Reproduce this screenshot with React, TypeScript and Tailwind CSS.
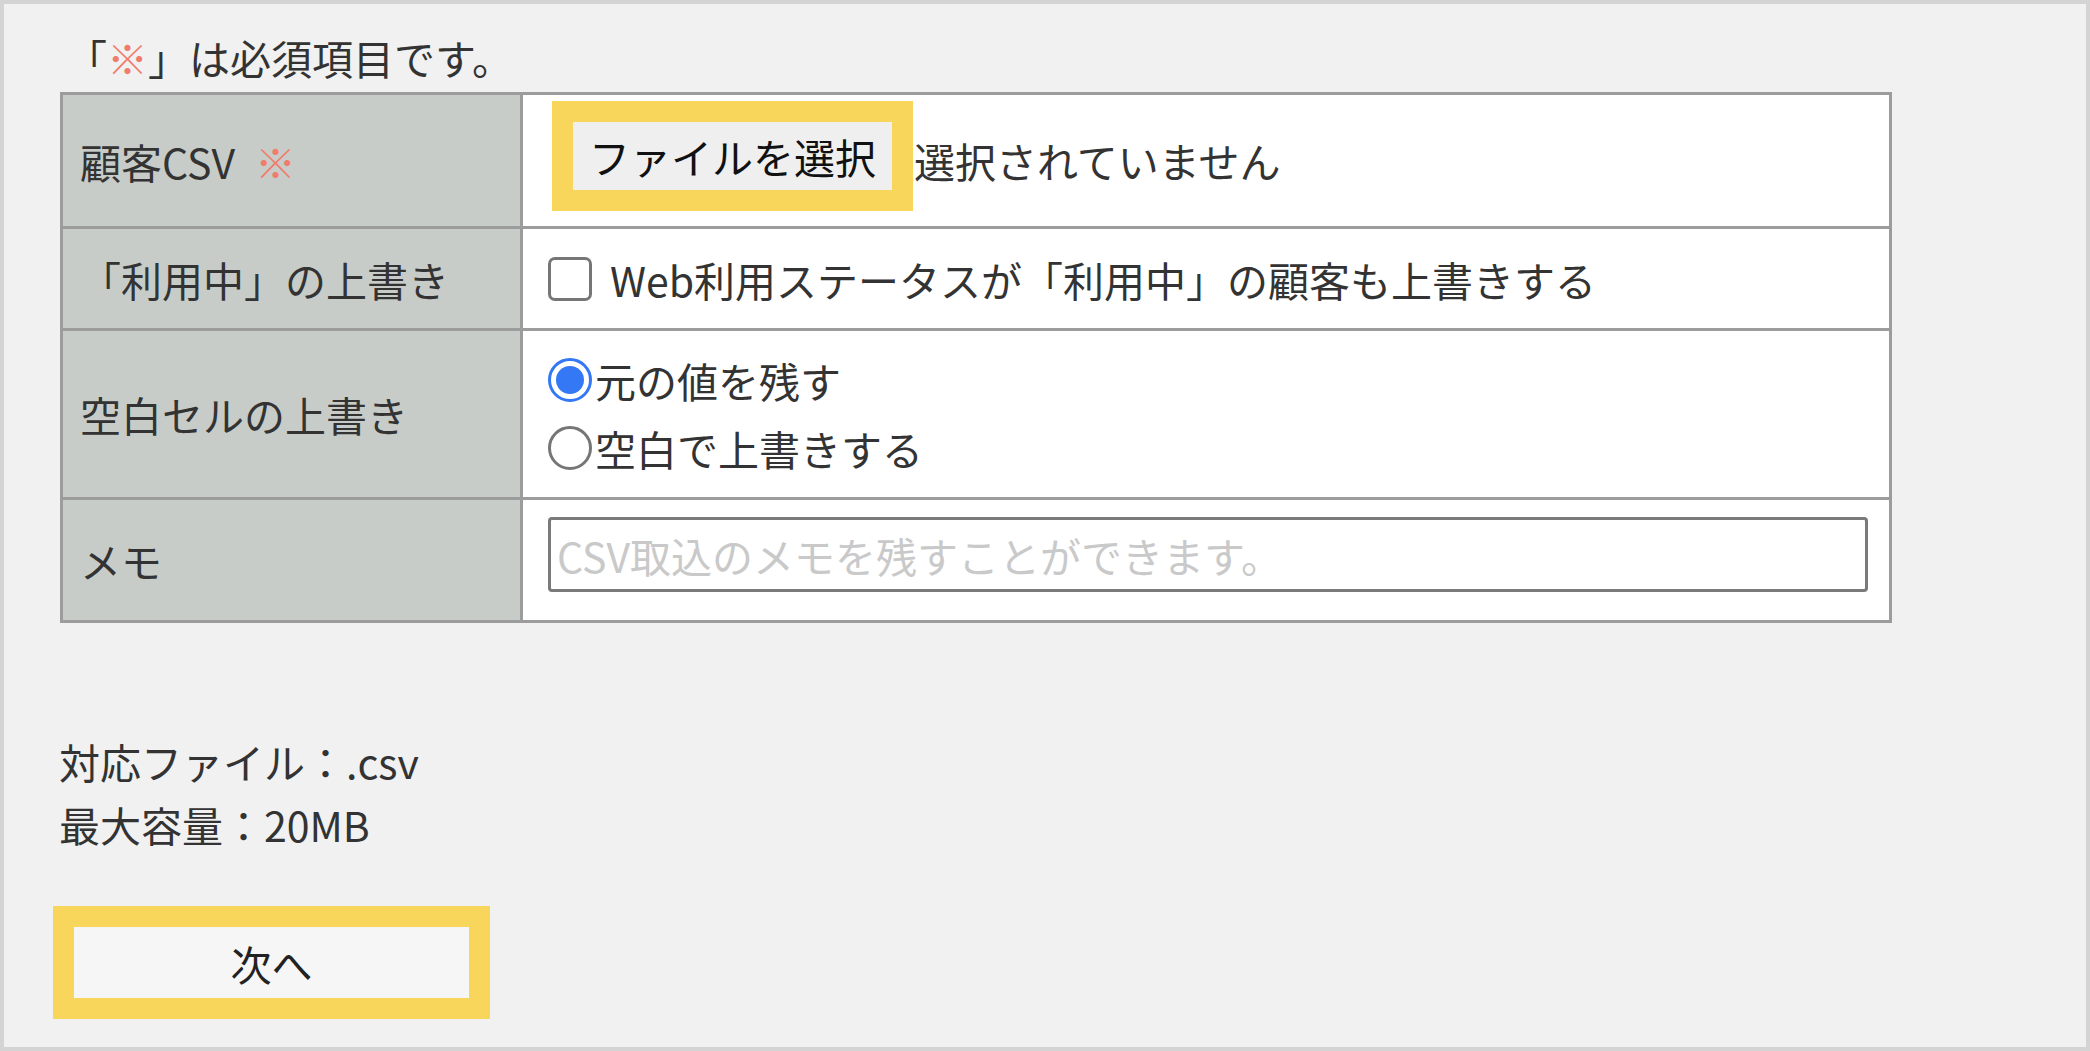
import React from 'react';

const HEAD = 'flex items-center pl-[17px] bg-[#c8ccc8] border-r-[3px] border-[#9c9c9c] w-[460px] shrink-0';

function Checkbox() {
  return <div className="w-[44px] h-[44px] shrink-0 rounded-[7px] border-[3px] border-[#767676] bg-white" />;
}

function Radio({ checked }: { checked?: boolean }) {
  if (checked) {
    return (
      <div className="flex w-[44px] h-[44px] shrink-0 rounded-full border-[3px] border-[#3478f6] bg-white p-[5px]">
        <div className="h-full w-full rounded-full bg-[#3478f6]" />
      </div>
    );
  }
  return <div className="w-[44px] h-[44px] shrink-0 rounded-full border-[3px] border-[#767676] bg-white" />;
}

export default function App() {
  return (
    <div className="w-[2090px] h-[1051px] overflow-hidden border-4 border-[#d4d4d4] bg-[#f0f1f0] text-[41px] leading-[42px] text-[#333] font-['Noto_Sans_CJK_JP',sans-serif]">
      <div className="pt-[32px] pl-[62px] h-[74px]">
        「<span className="text-[#f07c6c]">※</span>」は必須項目です。
      </div>

      {/* form table */}
      <div className="ml-[56px] mt-[14px] w-[1832px] border-[3px] border-[#9c9c9c] bg-white">
        <div className="flex h-[131px]">
          <div className={HEAD}>
            顧客CSV<span className="pl-[20px] text-[#f07c6c]">※</span>
          </div>
          <div className="flex flex-1 items-start pl-[29px] pt-[6px]">
            <div className="bg-[#f8d55b] p-[21px]">
              <div className="flex h-[68px] w-[319px] items-center justify-center bg-[#efefef] text-[#111]">ファイルを選択</div>
            </div>
            <span className="self-center pl-[1px] pb-[8px]">選択されていません</span>
          </div>
        </div>

        <div className="flex h-[102px] border-t-[3px] border-[#9c9c9c]">
          <div className={HEAD}>「利用中」の上書き</div>
          <div className="flex flex-1 items-center pl-[25px]">
            <Checkbox />
            <span className="ml-[18px]">Web利用ステータスが「利用中」の顧客も上書きする</span>
          </div>
        </div>

        <div className="flex h-[169px] border-t-[3px] border-[#9c9c9c]">
          <div className={HEAD}>空白セルの上書き</div>
          <div className="flex flex-1 flex-col justify-center pl-[25px]">
            <div className="flex h-[68px] items-center">
              <Radio checked />
              <span className="ml-[3px]">元の値を残す</span>
            </div>
            <div className="flex h-[68px] items-center">
              <Radio />
              <span className="ml-[3px]">空白で上書きする</span>
            </div>
          </div>
        </div>

        <div className="flex h-[123px] border-t-[3px] border-[#9c9c9c]">
          <div className={HEAD}>メモ</div>
          <div className="flex flex-1 items-start pl-[25px] pr-[21px] pt-[17px]">
            <input
              type="text"
              placeholder="CSV取込のメモを残すことができます。"
              className="h-[75px] w-full rounded-[4px] border-[3px] border-[#7a7a7a] bg-white pl-[6px] text-[41px] text-[#333] outline-none placeholder:text-[#c9c9c9]"
            />
          </div>
        </div>
      </div>

      <div className="ml-[55px] mt-[107px]">
        <div className="h-[63px] leading-[63px]">対応ファイル：.csv</div>
        <div className="h-[63px] leading-[63px]">最大容量：20MB</div>
      </div>

      <div className="ml-[49px] mt-[50px] w-fit bg-[#f8d55b] p-[21px]">
        <div className="flex h-[71px] w-[395px] items-center justify-center bg-[#f5f6f5] text-[#222]">次へ</div>
      </div>
    </div>
  );
}
